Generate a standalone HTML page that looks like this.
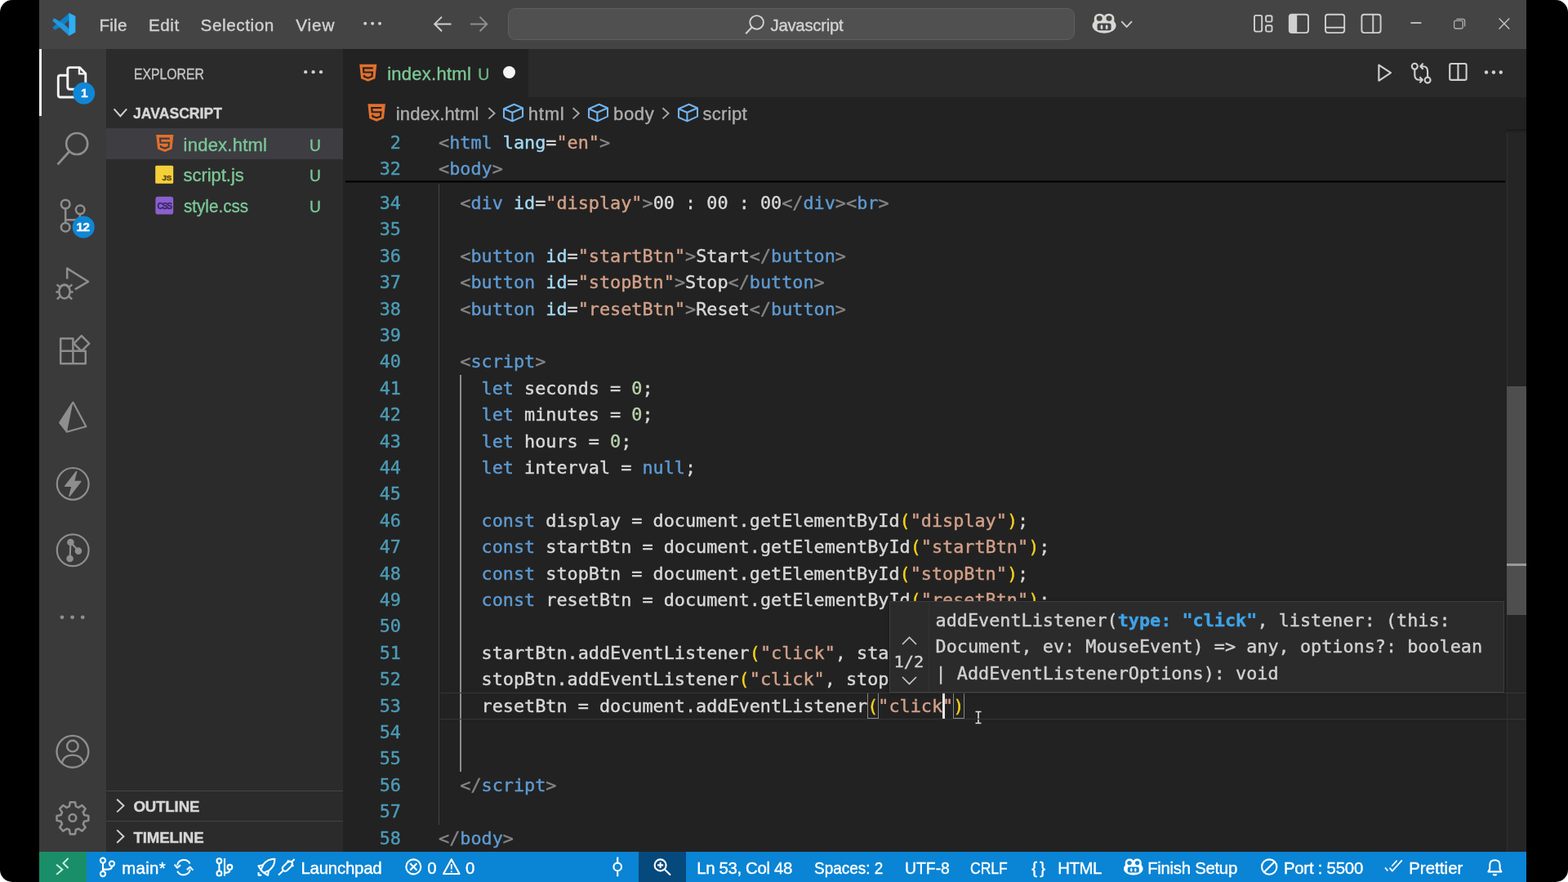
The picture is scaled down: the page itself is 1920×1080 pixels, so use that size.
<!DOCTYPE html>
<html lang="en">
<head>
<meta charset="utf-8">
<title>index.html - Javascript - Visual Studio Code</title>
<style>
html,body{margin:0;padding:0;background:#fff;}
body{width:1920px;height:1080px;overflow:hidden;position:relative;font-family:"Liberation Sans",sans-serif;color:#ccc;}
.frame{position:absolute;left:0;top:0;width:1920px;height:1080px;background:#000;border-radius:15px;overflow:hidden;will-change:transform;}
.abs{position:absolute;}
.t{position:absolute;white-space:pre;line-height:1;font-family:"Liberation Sans",sans-serif;-webkit-text-stroke:0.38px currentColor;}
svg{position:absolute;overflow:visible;}
/* regions */
#titlebar{left:48px;top:0;width:1821px;height:60px;background:#444444;}
#activity{left:48px;top:60px;width:82px;height:983px;background:#3a3a3a;}
#sidebar{left:130px;top:60px;width:290px;height:983px;background:#2b2b2b;}
#editor{left:420px;top:60px;width:1449px;height:983px;background:#222222;}
#status{left:48px;top:1043px;width:1821px;height:38px;background:#0a84d4;}
/* code */
.ln,.cl,.mono{font-family:"DejaVu Sans Mono","Liberation Mono",monospace;font-size:21.8px;letter-spacing:0.006px;-webkit-text-stroke:0.4px currentColor;}
.ln{position:absolute;left:439px;width:52px;text-align:right;height:32.4px;line-height:32.4px;color:#4c9bb6;white-space:pre;}
.cl{position:absolute;height:32.4px;line-height:32.4px;white-space:pre;color:#d4d4d4;}
.g{color:#858585;}.k{color:#5e9ad2;}.a{color:#a3d8f4;}.s{color:#d3a088;}.w{color:#d8d8d8;}.n{color:#b9d2ab;}.y{color:#f5d21a;}
</style>
</head>
<body>
<div class="frame">
<div id="titlebar" class="abs"></div>
<div id="activity" class="abs"></div>
<div id="sidebar" class="abs"></div>
<div id="editor" class="abs"></div>
<div id="status" class="abs"></div>
<div class="abs" style="left:622px;top:10px;width:694px;height:39px;box-sizing:border-box;background:#505050;border:1.3px solid #5f5f5f;border-radius:9px"></div>
<svg style="left:0;top:0" width="1920" height="60" viewBox="0 0 1920 60" fill="none">
<!-- vscode logo -->
<g>
<path d="M84.8 15.9 L84.8 24.5 L78.8 29.8 L67.4 36.7 L64.1 33.8 Z" fill="#0f80c6"/>
<path d="M66.5 22.3 L78.8 29.8 L84.8 35.6 L84.8 44 L64.1 25.2 Z" fill="#2197dd"/>
<path d="M84.4 15.8 L92.4 19.7 V39.6 L84.4 44 Z" fill="#2eaef4"/>
</g>
<!-- menu ellipsis -->
<circle cx="447.2" cy="28.8" r="2" fill="#d0d0d0"/><circle cx="456.1" cy="28.8" r="2" fill="#d0d0d0"/><circle cx="465" cy="28.8" r="2" fill="#d0d0d0"/>
<!-- nav arrows -->
<path d="M552.5 29.4 H532.5 M541 20.6 L532.2 29.4 L541 38.2" stroke="#d0d0d0" stroke-width="2"/>
<path d="M576 29.4 H596 M587.5 20.6 L596.3 29.4 L587.5 38.2" stroke="#8e8e8e" stroke-width="2"/>
<!-- search icon -->
<circle cx="926.6" cy="27.4" r="8.3" stroke="#d0d0d0" stroke-width="1.9"/>
<path d="M920.6 33.6 L913.2 41.2" stroke="#d0d0d0" stroke-width="2.1"/>
<!-- copilot -->
<g>
<ellipse cx="1352.1" cy="31.3" rx="14.5" ry="9.4" fill="#d8d8d8"/>
<rect x="1339.8" y="16.8" width="13.2" height="14" rx="6.2" fill="#d8d8d8"/>
<rect x="1351.2" y="16.8" width="13.2" height="14" rx="6.2" fill="#d8d8d8"/>
<ellipse cx="1346.2" cy="22.6" rx="3.5" ry="3.3" fill="#4a4840"/>
<ellipse cx="1358" cy="22.6" rx="3.5" ry="3.3" fill="#4a4840"/>
<rect x="1343.6" y="28.6" width="17" height="8.6" rx="2.5" fill="#444"/>
<rect x="1347.6" y="30.6" width="2.7" height="5.2" rx="1.3" fill="#d8d8d8"/>
<rect x="1353.8" y="30.6" width="2.7" height="5.2" rx="1.3" fill="#d8d8d8"/>
</g>
<path d="M1373.2 26.2 L1379.6 32.9 L1386 26.2" stroke="#d0d0d0" stroke-width="1.8"/>
<!-- layout icons -->
<g stroke="#d0d0d0" stroke-width="1.9">
<rect x="1536" y="18.9" width="9.2" height="19.7" rx="2"/>
<rect x="1550.1" y="19.2" width="7.4" height="7.4" rx="1.8"/>
<rect x="1550.1" y="31.2" width="7.4" height="7.4" rx="1.8"/>
<rect x="1578.8" y="17.7" width="23.2" height="22.4" rx="3"/>
<rect x="1623" y="17.7" width="23.2" height="22.4" rx="3"/>
<path d="M1623 33.7 H1646.2"/>
<rect x="1667.4" y="17.7" width="23.2" height="22.4" rx="3"/>
<path d="M1681.3 17.7 V40.1"/>
</g>
<path d="M1581.5 17.7 H1588.2 V40.1 H1581.5 Q1578.8 40.1 1578.8 37.1 V20.7 Q1578.8 17.7 1581.5 17.7Z" fill="#d0d0d0"/>
<!-- window controls -->
<path d="M1727.4 28 H1740.4" stroke="#c0c0c0" stroke-width="1.9"/>
<rect x="1780.6" y="25.4" width="10.6" height="9.6" rx="1.8" stroke="#b0b0b0" stroke-width="1.3"/>
<path d="M1783.4 23.3 H1791.3 Q1793.6 23.3 1793.6 25.6 V32.6" stroke="#b0b0b0" stroke-width="1.3"/>
<path d="M1835.6 22.6 L1848.2 35.4 M1848.2 22.6 L1835.6 35.4" stroke="#c4c4c4" stroke-width="1.4"/>
</svg>

<div class="abs" style="left:48px;top:60px;width:3.4px;height:81.5px;background:#f2f2f2"></div>
<svg style="left:0;top:0" width="140" height="1080" viewBox="0 0 140 1080" fill="none">
<!-- files (active) -->
<g stroke="#f4f4f4" stroke-width="2.9" stroke-linejoin="round">
<path d="M82.8 92.3 H74 Q71.3 92.3 71.3 95 V116.3 Q71.3 119 74 119 H90.5 Q93.2 119 93.2 116.3 V109.4"/>
<path d="M85.5 82.6 H97.5 L104.8 90 V106.6 Q104.8 109.3 102.1 109.3 H85.5 Q82.8 109.3 82.8 106.6 V85.3 Q82.8 82.6 85.5 82.6 Z"/>
<path d="M97 82.8 V90.4 H104.6" stroke-width="2.4"/>
</g>
<circle cx="102.8" cy="114.2" r="13.4" fill="#0f86d6"/>
<!-- search -->
<circle cx="94.2" cy="176" r="13" stroke="#8e8e8e" stroke-width="2.7"/>
<path d="M84.6 185.8 L70.6 201.4" stroke="#8e8e8e" stroke-width="2.9"/>
<!-- source control -->
<g stroke="#8e8e8e" stroke-width="2.5">
<circle cx="80.2" cy="250" r="5.3"/><circle cx="98.2" cy="256.8" r="5.3"/><circle cx="80.2" cy="278.2" r="5.3"/>
<path d="M80.2 255.4 V272.8 M98.2 262.2 Q98.2 269.3 90 269.3 H80.4"/>
</g>
<circle cx="102.2" cy="278" r="13.6" fill="#0f86d6"/>
<!-- run and debug -->
<g stroke="#8e8e8e" stroke-width="2.5" stroke-linejoin="round">
<path d="M82.2 341.5 V328.6 L108 344.8 L91.8 354.4"/>
<ellipse cx="79" cy="357.2" rx="6.6" ry="8.2"/>
<path d="M74.2 350.4 Q79 346.6 83.8 350.4" />
<path d="M72.4 357.4 H68.4 M85.6 357.4 H89.6 M73.4 351.6 L69.6 348.4 M84.6 351.6 L88.4 348.4 M73.6 363 L69.8 366.4 M84.4 363 L88.2 366.4"/>
</g>
<!-- extensions -->
<g stroke="#8e8e8e" stroke-width="2.5" stroke-linejoin="round">
<path d="M74.2 414.5 H89.4 V429.8 H104.8 V445.2 H74.2 Z M74.2 429.8 H89.4 V445.2"/>
<path d="M98.2 411.6 L107.6 421 L98.2 430.4 L88.8 421 Z" transform="translate(1.6,-0.4)"/>
</g>
<!-- prisma-like pyramid -->
<g>
<path d="M89.4 492.6 L105.4 522.2 L82 528.8 L73.2 517.6 Z" stroke="#8e8e8e" stroke-width="2.2" stroke-linejoin="round"/>
<path d="M89.4 492.6 L82 528.8 L73.2 517.6 Z" fill="#8e8e8e"/>
</g>
<!-- thunder -->
<circle cx="89.2" cy="592.4" r="19.4" stroke="#8e8e8e" stroke-width="2.2"/>
<path d="M93.6 577.6 L79.8 595.2 H88.2 L85 607.4 L98.8 589.6 H90.4 Z" fill="#8e8e8e" stroke="#8e8e8e" stroke-width="1.6" stroke-linejoin="round"/>
<!-- git graph -->
<circle cx="89.2" cy="673.8" r="19.4" stroke="#8e8e8e" stroke-width="2.2"/>
<g fill="#8e8e8e" stroke="#8e8e8e" stroke-width="2.2">
<circle cx="86.4" cy="664" r="3.2"/><circle cx="96" cy="674.6" r="3.2"/><circle cx="85.6" cy="684" r="3.2"/>
<path d="M86.4 664 L85.6 684 M86.4 664 L96 674.6"/>
</g>
<!-- more -->
<circle cx="76" cy="755.8" r="2.4" fill="#8e8e8e"/><circle cx="88.6" cy="755.8" r="2.4" fill="#8e8e8e"/><circle cx="101.2" cy="755.8" r="2.4" fill="#8e8e8e"/>
<!-- account -->
<g stroke="#8e8e8e" stroke-width="2.4">
<circle cx="88.9" cy="920.3" r="19.4"/>
<circle cx="88.9" cy="913.6" r="6.8"/>
<path d="M76 934.4 Q77.6 924.6 88.9 924.6 Q100.2 924.6 101.8 934.4"/>
</g>
<!-- gear -->
<g stroke="#8e8e8e" stroke-width="2.7" stroke-linejoin="round" transform="translate(88.9 1001.8) scale(0.95) translate(-88.9 -1002.2)">
<circle cx="88.9" cy="1001.8" r="4.6"/>
<path d="M85.7 981.6 H92.1 L93.1 987 L96.5 988.6 L101.1 985.6 L105.5 990.2 L102.5 994.6 L103.9 998.2 L109.3 999.2 V1005.4 L103.9 1006.4 L102.5 1009.8 L105.5 1014.2 L101.1 1018.8 L96.5 1015.8 L93.1 1017.2 L92.1 1022.8 H85.7 L84.7 1017.2 L81.3 1015.8 L76.7 1018.8 L72.3 1014.2 L75.3 1009.8 L73.9 1006.4 L68.5 1005.4 V999.2 L73.9 998.2 L75.3 994.6 L72.3 990.2 L76.7 985.6 L81.3 988.6 L84.7 987 Z"/>
</g>
</svg>
<div class="t" style="left:99px;top:106.2px;font-size:15.5px;font-weight:700;color:#fff">1</div>
<div class="t" style="left:93.6px;top:270.2px;font-size:15.2px;font-weight:700;color:#fff;letter-spacing:-0.6px">12</div>

<div class="abs" style="left:130px;top:157px;width:290px;height:38.4px;background:#3d3d42"></div>
<div class="abs" style="left:130px;top:967.6px;width:290px;height:1.4px;background:#454545"></div>
<div class="abs" style="left:130px;top:1004.8px;width:290px;height:1.4px;background:#454545"></div>
<svg style="left:0;top:0" width="430" height="1080" viewBox="0 0 430 1080" fill="none">
<circle cx="374.2" cy="88.2" r="2.1" fill="#cfcfcf"/><circle cx="383.6" cy="88.2" r="2.1" fill="#cfcfcf"/><circle cx="393" cy="88.2" r="2.1" fill="#cfcfcf"/>
<path d="M139.6 133.4 L147.4 142.2 L155.2 133.4" stroke="#d0d0d0" stroke-width="2"/>
<path d="M143.2 978.8 L151.4 986.6 L143.2 994.4" stroke="#d0d0d0" stroke-width="2"/>
<path d="M143.2 1016.4 L151.4 1024.2 L143.2 1032" stroke="#d0d0d0" stroke-width="2"/>
<!-- html5 -->
<path d="M191.2 165 H212.4 L210.5 182.6 L201.8 186 L193.1 182.6 Z" fill="#e2702c"/>
<path d="M207.8 169.6 H196 L196.5 174.7 H207.1 L206.5 180 L201.8 181.6 L197.1 180 L196.9 178" stroke="#3d3d42" stroke-width="2.1"/>
<!-- js -->
<rect x="190.2" y="202.8" width="22" height="22" rx="1.5" fill="#f5cf3a"/>
<!-- css -->
<rect x="190.4" y="240.8" width="21.8" height="21.8" rx="3.2" fill="#8a5fd0"/>
</svg>
<div class="t" style="left:198.6px;top:213px;font-size:9.8px;font-weight:700;color:#5a4a10;letter-spacing:-0.2px">JS</div>
<div class="t" style="left:192.4px;top:248.4px;font-size:10.2px;font-weight:700;color:#3c2a68;letter-spacing:-1.1px">CSS</div>

<div class="abs" style="left:420px;top:60px;width:1449px;height:59px;background:#2a2a2a"></div>
<div class="abs" style="left:420px;top:60px;width:226.8px;height:59px;background:#222"></div>
<div class="abs" style="left:616.2px;top:81.2px;width:15.2px;height:15.2px;border-radius:50%;background:#f4f4f4"></div>
<div id="code" class="abs" style="left:0;top:0">
<div class="abs" style="left:537px;top:224.5px;width:1.4px;height:785.3px;background:#454545"></div>
<div class="abs" style="left:563.2px;top:459.0px;width:1.5px;height:486.0px;background:#8c8c8c"></div>
<div class="abs" style="left:538.5px;top:847.8px;width:1330px;height:33.6px;border-top:1.6px solid #363636;border-bottom:1.6px solid #363636;box-sizing:border-box;z-index:3"></div>
<div class="ln" style="top:233.0px">34</div>
<div class="cl" style="top:233.0px;left:563.26px"><span class="g">&lt;</span><span class="k">div</span> <span class="a">id</span><span class="w">=</span><span class="s">"display"</span><span class="g">&gt;</span><span class="w">00 : 00 : 00</span><span class="g">&lt;/</span><span class="k">div</span><span class="g">&gt;</span><span class="g">&lt;</span><span class="k">br</span><span class="g">&gt;</span></div>
<div class="ln" style="top:265.4px">35</div>
<div class="ln" style="top:297.8px">36</div>
<div class="cl" style="top:297.8px;left:563.26px"><span class="g">&lt;</span><span class="k">button</span> <span class="a">id</span><span class="w">=</span><span class="s">"startBtn"</span><span class="g">&gt;</span><span class="w">Start</span><span class="g">&lt;/</span><span class="k">button</span><span class="g">&gt;</span></div>
<div class="ln" style="top:330.2px">37</div>
<div class="cl" style="top:330.2px;left:563.26px"><span class="g">&lt;</span><span class="k">button</span> <span class="a">id</span><span class="w">=</span><span class="s">"stopBtn"</span><span class="g">&gt;</span><span class="w">Stop</span><span class="g">&lt;/</span><span class="k">button</span><span class="g">&gt;</span></div>
<div class="ln" style="top:362.6px">38</div>
<div class="cl" style="top:362.6px;left:563.26px"><span class="g">&lt;</span><span class="k">button</span> <span class="a">id</span><span class="w">=</span><span class="s">"resetBtn"</span><span class="g">&gt;</span><span class="w">Reset</span><span class="g">&lt;/</span><span class="k">button</span><span class="g">&gt;</span></div>
<div class="ln" style="top:395.0px">39</div>
<div class="ln" style="top:427.4px">40</div>
<div class="cl" style="top:427.4px;left:563.26px"><span class="g">&lt;</span><span class="k">script</span><span class="g">&gt;</span></div>
<div class="ln" style="top:459.8px">41</div>
<div class="cl" style="top:459.8px;left:589.52px"><span class="k">let</span><span class="w"> seconds = </span><span class="n">0</span><span class="w">;</span></div>
<div class="ln" style="top:492.2px">42</div>
<div class="cl" style="top:492.2px;left:589.52px"><span class="k">let</span><span class="w"> minutes = </span><span class="n">0</span><span class="w">;</span></div>
<div class="ln" style="top:524.6px">43</div>
<div class="cl" style="top:524.6px;left:589.52px"><span class="k">let</span><span class="w"> hours = </span><span class="n">0</span><span class="w">;</span></div>
<div class="ln" style="top:557.0px">44</div>
<div class="cl" style="top:557.0px;left:589.52px"><span class="k">let</span><span class="w"> interval = </span><span class="k">null</span><span class="w">;</span></div>
<div class="ln" style="top:589.4px">45</div>
<div class="ln" style="top:621.8px">46</div>
<div class="cl" style="top:621.8px;left:589.52px"><span class="k">const</span><span class="w"> display = document.getElementById</span><span class="y">(</span><span class="s">"display"</span><span class="y">)</span><span class="w">;</span></div>
<div class="ln" style="top:654.2px">47</div>
<div class="cl" style="top:654.2px;left:589.52px"><span class="k">const</span><span class="w"> startBtn = document.getElementById</span><span class="y">(</span><span class="s">"startBtn"</span><span class="y">)</span><span class="w">;</span></div>
<div class="ln" style="top:686.6px">48</div>
<div class="cl" style="top:686.6px;left:589.52px"><span class="k">const</span><span class="w"> stopBtn = document.getElementById</span><span class="y">(</span><span class="s">"stopBtn"</span><span class="y">)</span><span class="w">;</span></div>
<div class="ln" style="top:719.0px">49</div>
<div class="cl" style="top:719.0px;left:589.52px"><span class="k">const</span><span class="w"> resetBtn = document.getElementById</span><span class="y">(</span><span class="s">"resetBtn"</span><span class="y">)</span><span class="w">;</span></div>
<div class="ln" style="top:751.4px">50</div>
<div class="ln" style="top:783.8px">51</div>
<div class="cl" style="top:783.8px;left:589.52px"><span class="w">startBtn.addEventListener</span><span class="y">(</span><span class="s">"click"</span><span class="w">, start</span><span class="y">)</span><span class="w">;</span></div>
<div class="ln" style="top:816.2px">52</div>
<div class="cl" style="top:816.2px;left:589.52px"><span class="w">stopBtn.addEventListener</span><span class="y">(</span><span class="s">"click"</span><span class="w">, stop</span><span class="y">)</span><span class="w">;</span></div>
<div class="ln" style="top:848.6px">53</div>
<div class="cl" style="top:848.6px;left:589.52px"><span class="w">resetBtn = document.addEventListener</span><span class="y">(</span><span class="s">"click"</span><span class="y">)</span></div>
<div class="ln" style="top:881.0px">54</div>
<div class="ln" style="top:913.4px">55</div>
<div class="ln" style="top:945.8px">56</div>
<div class="cl" style="top:945.8px;left:563.26px"><span class="g">&lt;/</span><span class="k">script</span><span class="g">&gt;</span></div>
<div class="ln" style="top:978.2px">57</div>
<div class="ln" style="top:1010.6px">58</div>
<div class="cl" style="top:1010.6px;left:537.00px"><span class="g">&lt;/</span><span class="k">body</span><span class="g">&gt;</span></div>
<div class="abs" style="left:1061.7px;top:848.0px;width:14.1px;height:32.4px;border:1.3px solid #888;box-sizing:border-box"></div>
<div class="abs" style="left:1166.7px;top:848.0px;width:14.1px;height:32.4px;border:1.3px solid #888;box-sizing:border-box"></div>
<div class="abs" style="left:1153.6px;top:848.4px;width:3px;height:31.8px;background:#e8e8e8"></div>
</div>
<div class="abs" style="left:423px;top:157.5px;width:1419.5px;height:64.5px;background:#222"></div>
<div class="abs" style="left:423px;top:221px;width:1419.5px;height:3.2px;background:linear-gradient(#0a0a0a,#050505 60%,#181818)"></div>
<div class="ln" style="top:158.5px">2</div>
<div class="cl" style="top:158.5px;left:537.00px"><span class="g">&lt;</span><span class="k">html</span> <span class="a">lang</span><span class="w">=</span><span class="s">"en"</span><span class="g">&gt;</span></div>
<div class="ln" style="top:190.7px">32</div>
<div class="cl" style="top:190.7px;left:537.00px"><span class="g">&lt;</span><span class="k">body</span><span class="g">&gt;</span></div>
<div class="abs" style="left:1844.5px;top:158px;width:24px;height:885px;background:#252525;border-left:1.3px solid #2f2f2f;box-sizing:border-box"></div>
<div class="abs" style="left:1844.5px;top:158px;width:24px;height:5px;background:linear-gradient(#1a1a1a,#252525)"></div>
<div class="abs" style="left:1844.5px;top:473.3px;width:24px;height:280px;background:#4e4e4e"></div>
<div class="abs" style="left:1844.5px;top:689.5px;width:24px;height:3px;background:#9a9a9a"></div>
<svg style="left:0;top:0" width="1920" height="160" viewBox="0 0 1920 160" fill="none">
<!-- tab html5 -->
<path d="M440.2 78.8 H461.3 L459.4 96.3 L450.7 99.8 L442.1 96.3 Z" fill="#e2702c"/>
<path d="M456.7 83.4 H444.9 L445.4 88.5 H456 L455.4 93.8 L450.7 95.4 L446 93.8 L445.8 91.8" stroke="#222" stroke-width="2.1"/>
<!-- breadcrumb html5 -->
<path d="M450.4 127.3 H471.9 L470 145.1 L461.1 148.7 L452.3 145.1 Z" fill="#e2702c"/>
<path d="M467.2 132 H455.2 L455.7 137.2 H466.5 L465.9 142.6 L461.1 144.2 L456.3 142.6 L456.1 140.6" stroke="#222" stroke-width="2.1"/>
<!-- breadcrumb separators -->
<g stroke="#a8a8a8" stroke-width="1.9">
<path d="M598.4 132.2 L605.6 138.8 L598.4 145.4"/>
<path d="M701.6 132.2 L708.8 138.8 L701.6 145.4"/>
<path d="M811.4 132.2 L818.6 138.8 L811.4 145.4"/>
</g>
<!-- cubes -->
<g stroke="#6fb4f0" stroke-width="2.1" stroke-linejoin="round">
<path d="M617 133.2 L629.6 127.8 L640 132.2 V142.6 L627.4 148.4 L617 143.8 Z M617 133.2 L627.4 137.8 L640 132.2 M627.4 137.8 V148.4"/>
<path d="M721 133.2 L733.6 127.8 L744 132.2 V142.6 L731.4 148.4 L721 143.8 Z M721 133.2 L731.4 137.8 L744 132.2 M731.4 137.8 V148.4"/>
<path d="M831 133.2 L843.6 127.8 L854 132.2 V142.6 L841.4 148.4 L831 143.8 Z M831 133.2 L841.4 137.8 L854 132.2 M841.4 137.8 V148.4"/>
</g>
<!-- editor actions -->
<g stroke="#d0d0d0" stroke-width="2.1" stroke-linejoin="round">
<path d="M1688.4 79.6 V98.8 L1703 89.2 Z"/>
<circle cx="1732.3" cy="81.2" r="3.5"/><circle cx="1748.1" cy="98.1" r="3.5"/>
<path d="M1732.3 84.8 V91.5 Q1732.3 97.8 1738.2 97.8 H1741 M1738.4 94.2 L1741.8 97.8 L1738.4 101.4"/>
<path d="M1748.1 94.6 V87.4 Q1748.1 81.2 1742.4 81.2 H1740 M1742.6 77.6 L1739.2 81.2 L1742.6 84.8"/>
<rect x="1775.2" y="78" width="20.4" height="19.9" rx="2"/>
<path d="M1785.4 78 V97.9"/>
</g>
<circle cx="1820" cy="88.5" r="2.2" fill="#d0d0d0"/><circle cx="1828.9" cy="88.5" r="2.2" fill="#d0d0d0"/><circle cx="1837.8" cy="88.5" r="2.2" fill="#d0d0d0"/>
</svg>

<div class="abs" style="left:1089px;top:735.6px;width:753px;height:112px;background:#2b2b2b;border:1.3px solid #3d3d3d;box-sizing:border-box;box-shadow:0 1px 4px rgba(0,0,0,.35)"></div>
<div class="abs" style="left:1137px;top:738px;width:1.2px;height:108px;background:#333"></div>
<svg style="left:1104px;top:779px" width="19" height="11" viewBox="0 0 19 11"><path d="M1 10 L9.5 1.5 L18 10" fill="none" stroke="#c8c8c8" stroke-width="1.7"/></svg>
<svg style="left:1104px;top:827.8px" width="19" height="11" viewBox="0 0 19 11"><path d="M1 1 L9.5 9.5 L18 1" fill="none" stroke="#c8c8c8" stroke-width="1.7"/></svg>
<div class="mono abs" style="left:1094.5px;top:794.7px;font-size:20.3px;line-height:30px;color:#d0d0d0;white-space:pre">1/2</div>
<div class="cl" style="left:1145.5px;top:744px;color:#d0d0d0">addEventListener(<b style="color:#3fa2e8">type: "click"</b>, listener: (this:</div>
<div class="cl" style="left:1145.5px;top:776.4px;color:#d0d0d0">Document, ev: MouseEvent) =&gt; any, options?: boolean</div>
<div class="cl" style="left:1145.5px;top:808.6px;color:#d0d0d0">| AddEventListenerOptions): void</div>
<!-- mouse I-beam -->
<svg style="left:1193.2px;top:870px" width="10" height="17" viewBox="0 0 10 17"><path d="M1.5 1.5 H8.5 M5 1.5 V15.5 M1.5 15.5 H8.5" fill="none" stroke="#e0e0e0" stroke-width="1.6"/></svg>

<div class="abs" style="left:48px;top:1043px;width:58.2px;height:38px;background:#1a8e68"></div>
<div class="abs" style="left:782px;top:1043px;width:58px;height:38px;background:#06497c"></div>
<svg style="left:0;top:1040px" width="1920" height="40" viewBox="0 1040 1920 40" fill="none">
<!-- remote -->
<path d="M69.2 1058.8 L76.4 1064.8 L69.2 1070.8 M83.6 1051 L77.4 1057 L83.6 1063" stroke="#c8f7e0" stroke-width="1.9"/>
<g stroke="#fff" stroke-width="2.1" stroke-linejoin="round">
<!-- branch -->
<circle cx="126" cy="1053.6" r="3.1"/><circle cx="137" cy="1057.6" r="3.1"/><circle cx="126" cy="1070" r="3.1"/>
<path d="M126 1056.8 V1066.8 M137 1060.8 Q137 1064.6 132 1064.6 H126.2"/>
<!-- sync -->
<path d="M217 1059.6 A8.4 8.4 0 0 1 232.6 1057.4 M232.8 1064.6 A8.4 8.4 0 0 1 217.2 1066.8"/>
<path d="M213.6 1058.6 L217 1062.6 L221 1059.2 M236.4 1065.6 L232.8 1061.6 L228.8 1065"/>
<!-- git compare -->
<circle cx="268.4" cy="1054.2" r="2.9"/><circle cx="268.4" cy="1069.4" r="2.9"/><circle cx="281.4" cy="1061.8" r="2.9"/>
<path d="M268.4 1057.2 V1066.4 M275 1051 V1072.4 M281.4 1064.8 Q281.4 1068.6 277.4 1068.6 H275.2"/>
<!-- rocket -->
<path d="M336.4 1051.8 Q327.8 1051.6 322.6 1058.4 L319.4 1065.2 L323 1068.8 L329.8 1065.6 Q336.6 1060.4 336.4 1051.8 Z"/>
<path d="M322.2 1059.2 L316.4 1060.2 L319.4 1065 M329 1066 L328 1071.8 L323.2 1068.8"/>
<path d="M316.6 1068 L316.6 1071.6 L320.2 1071.6"/>
<!-- plug -->
<path d="M346.6 1061.2 L352.4 1055.4 Q355 1053.6 357 1055.6 Q359 1057.6 357.2 1060.2 L351.4 1066 Q348.8 1067.8 346.8 1065.8 Q344.8 1063.8 346.6 1061.2 Z"/>
<path d="M346.2 1066.4 L341 1071.6 M357.6 1055 L360.6 1052 M352 1053.4 L354.6 1056 M356.8 1058.2 L359.4 1060.8"/>
<!-- error / warning -->
<circle cx="506.3" cy="1061.4" r="9"/>
<path d="M502.2 1057.3 L510.4 1065.5 M510.4 1057.3 L502.2 1065.5"/>
<path d="M552.8 1052.2 L562.6 1070 H543 Z"/>
<path d="M552.8 1058 V1064.6 M552.8 1066.2 V1068.2" stroke-width="1.8"/>
<!-- commit -->
<circle cx="756.2" cy="1061.4" r="4.8"/>
<path d="M756.2 1049.6 V1056.4 M756.2 1066.4 V1073.2"/>
<!-- zoom -->
<circle cx="808.6" cy="1059.4" r="7"/>
<path d="M813.8 1064.6 L821 1071.6 M805 1059.4 H812.2 M808.6 1055.8 V1063" />
<!-- circle slash -->
<circle cx="1554.2" cy="1061.6" r="9.2"/>
<path d="M1547.8 1068 L1560.6 1055.2"/>
<!-- double check -->
<path d="M1696 1062.4 L1699.4 1066.4 M1701.6 1062.6 L1704.8 1066.6 L1716.8 1053.4 M1704.2 1060.8 L1710.6 1053.6" stroke-width="1.7"/>
<!-- bell -->
<path d="M1822.4 1067.4 H1838.4 L1836.6 1064 V1059.4 Q1836.6 1053.2 1830.4 1053.2 Q1824.2 1053.2 1824.2 1059.4 V1064 Z"/>
<path d="M1828.2 1070.4 Q1830.4 1072.6 1832.6 1070.4"/>
</g>
<!-- copilot small -->
<g>
<ellipse cx="1387.8" cy="1063.8" rx="11.8" ry="7.8" fill="#fff"/>
<rect x="1377.8" y="1051.6" width="10.8" height="12" rx="5" fill="#fff"/>
<rect x="1387" y="1051.6" width="10.8" height="12" rx="5" fill="#fff"/>
<ellipse cx="1383" cy="1056.6" rx="2.7" ry="2.6" fill="#0a84d4"/>
<ellipse cx="1392.6" cy="1056.6" rx="2.7" ry="2.6" fill="#0a84d4"/>
<rect x="1380.8" y="1061.4" width="14" height="7.2" rx="2" fill="#0a84d4"/>
<rect x="1384.2" y="1063" width="2.2" height="4.4" rx="1.1" fill="#fff"/>
<rect x="1389.2" y="1063" width="2.2" height="4.4" rx="1.1" fill="#fff"/>
</g>
</svg>

<div class="t" style="left:121.4px;top:21.1px;font-size:20.7px;color:#d0d0d0;letter-spacing:0.24px;">File</div>
<div class="t" style="left:181.9px;top:21.1px;font-size:20.7px;color:#d0d0d0;letter-spacing:0.54px;">Edit</div>
<div class="t" style="left:245.6px;top:21.1px;font-size:20.7px;color:#d0d0d0;letter-spacing:0.58px;">Selection</div>
<div class="t" style="left:362.3px;top:21.1px;font-size:20.7px;color:#d0d0d0;letter-spacing:0.86px;">View</div>
<div class="t" style="left:943.5px;top:20.5px;font-size:20.3px;color:#d2d2d2;letter-spacing:-0.23px;">Javascript</div>
<div class="t" style="left:163.8px;top:82.2px;font-size:18.7px;color:#c4c4c4;transform:scaleX(0.8440);transform-origin:0 50%;">EXPLORER</div>
<div class="t" style="left:163.4px;top:130.1px;font-size:18.7px;color:#d6d6d6;transform:scaleX(0.9428);transform-origin:0 50%;font-weight:700;">JAVASCRIPT</div>
<div class="t" style="left:224.6px;top:166.8px;font-size:22px;color:#7cc796;letter-spacing:0.23px;">index.html</div>
<div class="t" style="left:224.6px;top:204.2px;font-size:22px;color:#7cc796;letter-spacing:-0.05px;">script.js</div>
<div class="t" style="left:224.6px;top:241.8px;font-size:22px;color:#7cc796;transform:scaleX(0.9377);transform-origin:0 50%;">style.css</div>
<div class="t" style="left:378.8px;top:168.0px;font-size:20.5px;color:#7cc796;transform:scaleX(0.9384);transform-origin:0 50%;">U</div>
<div class="t" style="left:378.8px;top:205.4px;font-size:20.5px;color:#7cc796;transform:scaleX(0.9384);transform-origin:0 50%;">U</div>
<div class="t" style="left:378.8px;top:243.0px;font-size:20.5px;color:#7cc796;transform:scaleX(0.9384);transform-origin:0 50%;">U</div>
<div class="t" style="left:163.4px;top:978.9px;font-size:18.7px;color:#d6d6d6;letter-spacing:-0.16px;font-weight:700;">OUTLINE</div>
<div class="t" style="left:163.4px;top:1017.0px;font-size:18.7px;color:#d6d6d6;letter-spacing:-0.13px;font-weight:700;">TIMELINE</div>
<div class="t" style="left:474.2px;top:80.0px;font-size:22px;color:#7cc796;letter-spacing:0.26px;">index.html</div>
<div class="t" style="left:585.2px;top:82.1px;font-size:19.5px;color:#6fb587;letter-spacing:0.41px;">U</div>
<div class="t" style="left:484.8px;top:129.1px;font-size:22px;color:#adadad;letter-spacing:0.16px;">index.html</div>
<div class="t" style="left:646.8px;top:129.1px;font-size:22px;color:#adadad;letter-spacing:0.76px;">html</div>
<div class="t" style="left:751.0px;top:129.1px;font-size:22px;color:#adadad;letter-spacing:0.65px;">body</div>
<div class="t" style="left:860.5px;top:129.1px;font-size:22px;color:#adadad;letter-spacing:0.31px;">script</div>
<div class="t" style="left:149.2px;top:1052.7px;font-size:20.4px;color:#fff;letter-spacing:0.33px;">main*</div>
<div class="t" style="left:368.5px;top:1052.7px;font-size:20.4px;color:#fff;letter-spacing:-0.22px;">Launchpad</div>
<div class="t" style="left:523.2px;top:1052.7px;font-size:20.4px;color:#fff;letter-spacing:1.16px;">0</div>
<div class="t" style="left:569.9px;top:1052.7px;font-size:20.4px;color:#fff;letter-spacing:1.16px;">0</div>
<div class="t" style="left:853.2px;top:1052.7px;font-size:20.4px;color:#fff;letter-spacing:-0.35px;">Ln 53, Col 48</div>
<div class="t" style="left:996.5px;top:1052.7px;font-size:20.4px;color:#fff;transform:scaleX(0.9285);transform-origin:0 50%;">Spaces: 2</div>
<div class="t" style="left:1107.5px;top:1052.7px;font-size:20.4px;color:#fff;transform:scaleX(0.9501);transform-origin:0 50%;">UTF-8</div>
<div class="t" style="left:1188.2px;top:1052.7px;font-size:20.4px;color:#fff;transform:scaleX(0.8601);transform-origin:0 50%;">CRLF</div>
<div class="t" style="left:1263.2px;top:1052.7px;font-size:20.4px;color:#fff;letter-spacing:3.29px;">{}</div>
<div class="t" style="left:1295.2px;top:1052.7px;font-size:20.4px;color:#fff;letter-spacing:-0.43px;">HTML</div>
<div class="t" style="left:1405.2px;top:1052.7px;font-size:20.4px;color:#fff;letter-spacing:-0.30px;">Finish Setup</div>
<div class="t" style="left:1571.9px;top:1052.7px;font-size:20.4px;color:#fff;letter-spacing:-0.24px;">Port : 5500</div>
<div class="t" style="left:1725.2px;top:1052.7px;font-size:20.4px;color:#fff;letter-spacing:0.06px;">Prettier</div>
</div>
</body>
</html>
